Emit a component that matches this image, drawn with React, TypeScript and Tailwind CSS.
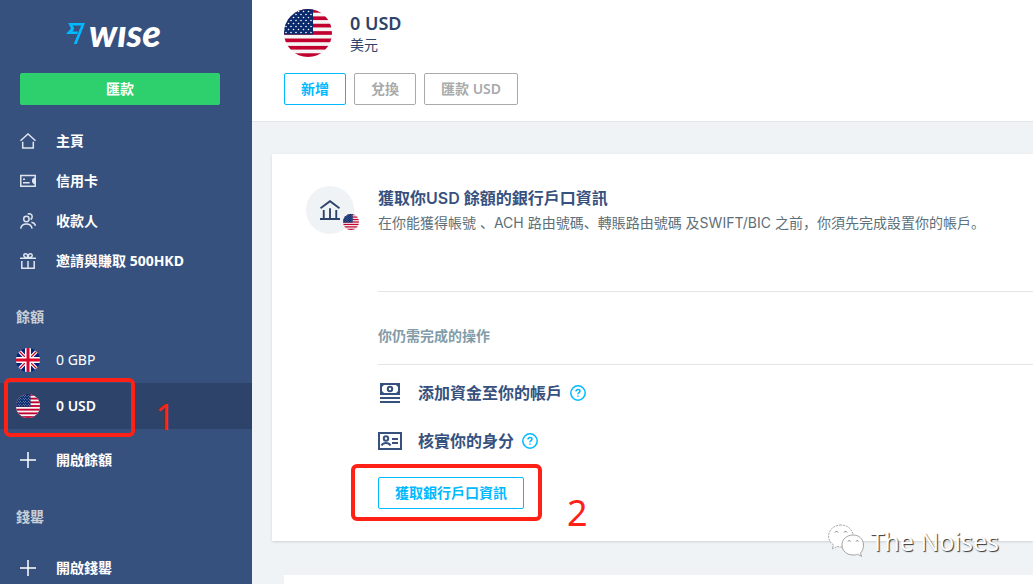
import type { ReactNode } from "react";

const UsFlag = ({ className }: { className: string }) => (
  <svg viewBox="0 0 48 48" className={`shrink-0 rounded-full ${className}`} aria-hidden="true">
    <rect width="48" height="48" fill="#f5f5f5" />
    {[0, 1, 2, 3, 4, 5, 6].map((i) => (
      <rect key={i} y={i * 7.38} width="48" height="3.69" fill="#c1002f" />
    ))}
    <rect width="29" height="25.5" fill="#0a2a6e" />
    {[3, 6, 9, 12, 15, 18, 21, 24].map((y, row) =>
      [2, 7, 12, 17, 22, 27].map((x) => (
        <circle key={`${x}-${y}`} cx={row % 2 ? x : x - 2.5} cy={y - 0.5} r="0.8" fill="#fff" />
      ))
    )}
  </svg>
);

const GbFlag = ({ className }: { className: string }) => (
  <svg viewBox="0 0 48 48" className={`shrink-0 rounded-full ${className}`} aria-hidden="true">
    <rect width="48" height="48" fill="#00247d" />
    <path d="M0 0l48 48M48 0L0 48" stroke="#fff" strokeWidth="7" />
    <path d="M0 0l48 48M48 0L0 48" stroke="#d8062c" strokeWidth="2.5" />
    <path d="M24 0v48M0 24h48" stroke="#fff" strokeWidth="12" />
    <path d="M24 0v48M0 24h48" stroke="#d8062c" strokeWidth="6" />
  </svg>
);

const Icon = ({ children, className = "size-4" }: { children: ReactNode; className?: string }) => (
  <svg
    viewBox="0 0 16 16"
    fill="none"
    stroke="currentColor"
    strokeWidth="1.5"
    className={`shrink-0 ${className}`}
    aria-hidden="true"
  >
    {children}
  </svg>
);

const HelpIcon = () => (
  <Icon>
    <circle cx="8" cy="8" r="7.2" />
    <path d="M6 6.6C6 5.3 6.8 4.6 8 4.6s2 .7 2 1.7c0 1.3-2 1.5-2 3" />
    <path d="M8 10.4v1.4" />
  </Icon>
);

const Plus = () => (
  <Icon>
    <path d="M8 0v16M0 8h16" />
  </Icon>
);

const navItems = [
  {
    label: "主頁",
    icon: (
      <Icon>
        <path d="M.5 7.700L8 1l7.500 6.700M2.700 8.800v6.200h10.600V8.800" />
      </Icon>
    ),
  },
  {
    label: "信用卡",
    icon: (
      <Icon>
        <path d="M.8 2.5h14.4v10.8H.8zM3 6.3h2M3 9.7h6.6" />
        <path d="M15.2 5.5a2.4 2.4 0 000 5z" fill="currentColor" />
      </Icon>
    ),
  },
  {
    label: "收款人",
    icon: (
      <Icon>
        <circle cx="6.4" cy="6" r="2.7" />
        <path d="M.7 15.6c.5-3 2.700-4.500 5.700-4.500s5.200 1.500 5.700 4.500M7.700 1.100c2.200-1.100 4.500.4 4.500 2.500 0 1.300-.6 2.300-1.600 2.900M11.400 9.200c2.200.3 3.700 1.400 4.100 3.600" />
      </Icon>
    ),
  },
  {
    label: "邀請與賺取 500HKD",
    icon: (
      <Icon>
        <path d="M0 5.200h16M1.800 8v7.300h12.400V8M8 8v7.300M7.900 4.700C5.600 4.700 3.800 4 3.800 2.500 3.800 1.400 4.600.8 5.600.8 7 .8 7.900 2 7.900 4.700zM8.100 4.700c2.300 0 4.100-.7 4.100-2.200 0-1.100-.8-1.700-1.800-1.700-1.400 0-2.300 1.200-2.300 3.900z" />
      </Icon>
    ),
  },
];

const linkClass = "flex items-center gap-5 px-5 text-sm text-white";

const Sidebar = () => (
  <aside className="w-63 shrink-0 bg-[#37517e]">
    <a href="#" aria-label="Wise" className="mt-3 ml-[66px] flex h-10 w-fit items-center gap-1">
      <svg viewBox="0 0 19 24" className="h-6 w-[19px]" fill="#00b9ff" aria-hidden="true">
        <path d="M2.200 3H19L10.700 24H7.800L15.100 5.600H6.500L8.300 8.500 6.500 11.400H12L11 14H0L5 8.500z" />
      </svg>
      <span className="font-['Lato',sans-serif] text-[38px] leading-10 font-black text-white italic">wıse</span>
    </a>
    <button className="mx-5 mt-[21px] block h-8 w-50 rounded-xs bg-[#2ed06e] text-sm font-bold text-white">
      匯款
    </button>

    <nav className="mt-4">
      {navItems.map((item) => (
        <a key={item.label} href="#" className={`${linkClass} h-10 font-bold`}>
          <span className="text-[#dfe5ee]">{item.icon}</span>
          {item.label}
        </a>
      ))}

      <h2 className="mt-[26px] px-4 text-sm leading-5 font-bold text-[#c9cfd6]">餘額</h2>
      <div className="mt-[9px]">
        <a href="#" className="flex h-[47px] items-center gap-4 px-4 text-sm text-white">
          <GbFlag className="size-6" />0 GBP
        </a>
        <div className="relative bg-[#2e4369]">
          <a href="#" className="flex h-[46px] items-center gap-4 px-4 text-sm font-semibold text-white">
            <UsFlag className="size-6" />0 USD
          </a>
          <div className="pointer-events-none absolute -top-[5px] left-1 h-[59px] w-[131px] rounded-md border-4 border-[#ff2116]" />
          <span className="absolute top-4 left-[155px] text-4xl leading-9 text-[#ff2116]">1</span>
        </div>
        <a href="#" className={`${linkClass} h-[62px] font-bold`}>
          <Plus />
          開啟餘額
        </a>
      </div>

      <h2 className="mt-4 px-4 text-sm leading-5 font-bold text-[#c9cfd6]">錢罌</h2>
      <a href="#" className={`${linkClass} mt-[10px] h-[62px] font-bold`}>
        <Plus />
        開啟錢罌
      </a>
    </nav>
  </aside>
);

const AccountHeader = () => (
  <header className="border-b border-[#e2e6e8] bg-white px-8 pt-[9px] pb-4">
    <div className="flex items-center gap-[18px]">
      <UsFlag className="size-12" />
      <div className="text-[#2e4369]">
        <h1 className="text-lg leading-6 font-semibold">0 USD</h1>
        <p className="text-sm leading-5">美元</p>
      </div>
    </div>
    <div className="mt-4 flex gap-2 text-sm font-semibold">
      <button className="h-8 rounded-xs border border-[#00b9ff] px-4 text-[#00b9ff]">新增</button>
      <button className="h-8 rounded-xs border border-[#a8aaac] px-4 text-[#a8aaac]">兌換</button>
      <button className="h-8 rounded-xs border border-[#a8aaac] px-4 text-[#a8aaac]">匯款 USD</button>
    </div>
  </header>
);

const BankDetailsCard = () => (
  <section className="mt-8 ml-5 flex gap-6 bg-white pt-8 pb-8 pl-[34px] font-['Inter','Noto_Sans_CJK_SC',sans-serif] shadow-sm">
    <div className="relative flex size-12 shrink-0 items-center justify-center rounded-full bg-[#f0f3f6] text-[#2e4369]">
      <Icon className="size-5">
        <path d="M.4 6.600L8 .9l7.600 5.700M0 15.200h16M3 8v7M8 6.500V15M13 8v7" />
      </Icon>
      <UsFlag className="absolute -right-[5px] bottom-1 size-4" />
    </div>
    <div className="min-w-0 flex-1">
      <div className="pb-14">
        <h2 className="text-base leading-[25px] font-semibold text-[#37517e]">獲取你USD 餘額的銀行戶口資訊</h2>
        <p className="text-sm leading-6 text-[#5d7079]">
          在你能獲得帳號 、ACH 路由號碼、轉賬路由號碼 及SWIFT/BIC 之前，你須先完成設置你的帳戶。
        </p>
      </div>
      <h3 className="border-y border-[#e2e6e8] pt-8 pb-4 text-sm leading-6 font-semibold text-[#829ca9]">
        你仍需完成的操作
      </h3>
      <ul className="mt-1 text-base font-semibold text-[#37517e]">
        <li className="flex h-12 items-center">
          <svg viewBox="0 0 24 24" className="mr-4 size-6" fill="none" stroke="currentColor" strokeWidth="2" aria-hidden="true">
            <path d="M3 3h18v10H3zM2 17h20M2 21h20" />
            <circle cx="12" cy="8" r="2.200" />
            <path d="M3 3h4L3 7zM21 3h-4l4 4zM3 13h4l-4-4zM21 13h-4l4-4z" fill="currentColor" strokeWidth="0" />
          </svg>
          添加資金至你的帳戶
          <button aria-label="Help" className="ml-2 text-[#00b9ff]">
            <HelpIcon />
          </button>
        </li>
        <li className="flex h-12 items-center">
          <svg viewBox="0 0 24 24" className="mr-4 size-6" fill="none" stroke="currentColor" strokeWidth="2" aria-hidden="true">
            <path d="M1 4h22v16H1zM14 10h6M14 14h6" />
            <circle cx="8" cy="9.500" r="2.200" />
            <path d="M3.500 16.500c1-2 2.500-2.500 4.500-2.500s3.500.5 4.500 2.500" />
          </svg>
          核實你的身分
          <button aria-label="Help" className="ml-2 text-[#00b9ff]">
            <HelpIcon />
          </button>
        </li>
      </ul>
      <div className="relative mt-3 w-fit">
        <button className="block h-8 rounded-xs border border-[#00b9ff] px-4 text-sm font-semibold text-[#00b9ff]">
          獲取銀行戶口資訊
        </button>
        <div className="pointer-events-none absolute -top-[13px] -left-[27px] h-[57px] w-[191px] rounded-md border-4 border-[#ff2116]" />
        <span className="absolute top-4 left-[189px] font-['Noto_Sans',sans-serif] text-4xl leading-10 text-[#ff2116]">
          2
        </span>
      </div>
    </div>
  </section>
);

const Watermark = () => (
  <div className="absolute right-[34px] bottom-[26px] flex items-center gap-1.5 text-white">
    <svg viewBox="0 0 36 34" className="h-[34px] w-9" fill="#fff" stroke="#8b8e91" strokeWidth="0.8" aria-hidden="true">
      <path d="M13 1C6 1 .6 6 .6 12c0 4 2 7 5 9l-1.500 4 5-2.500c4 1 8 .5 11-1.500 3-2 5-5 5-9C25 6 20 1 13 1z" strokeDasharray="2 1" />
      <path d="M25 11c-6 0-11 4-11 10s5 10 11 10c2 0 3 0 4.500-.8l4 2.200-1-3.500c2-2 3-4.500 3-7.900C35.500 15 31 11 25 11z" />
      <path d="M7 8.500a1.600 1.600 0 013 0M16 8.500a1.600 1.600 0 013 0M20 17.500a1.400 1.400 0 012.600 0M28 17.500a1.400 1.400 0 012.600 0" fill="none" stroke="#666" />
    </svg>
    <span className="text-[25px] leading-8 [text-shadow:1px_1px_1px_#333]">The Noises</span>
  </div>
);

const App = () => {
  return (
    <div
      lang="zh-CN"
      className="relative flex h-screen overflow-hidden bg-[#f0f3f6] font-['Noto_Sans','Noto_Sans_CJK_SC',sans-serif]"
    >
      <Sidebar />
      <main className="min-w-0 flex-1">
        <AccountHeader />
        <BankDetailsCard />
        <section className="mt-[34px] ml-8 h-20 bg-white" />
      </main>
      <Watermark />
    </div>
  );
};

export default App;
